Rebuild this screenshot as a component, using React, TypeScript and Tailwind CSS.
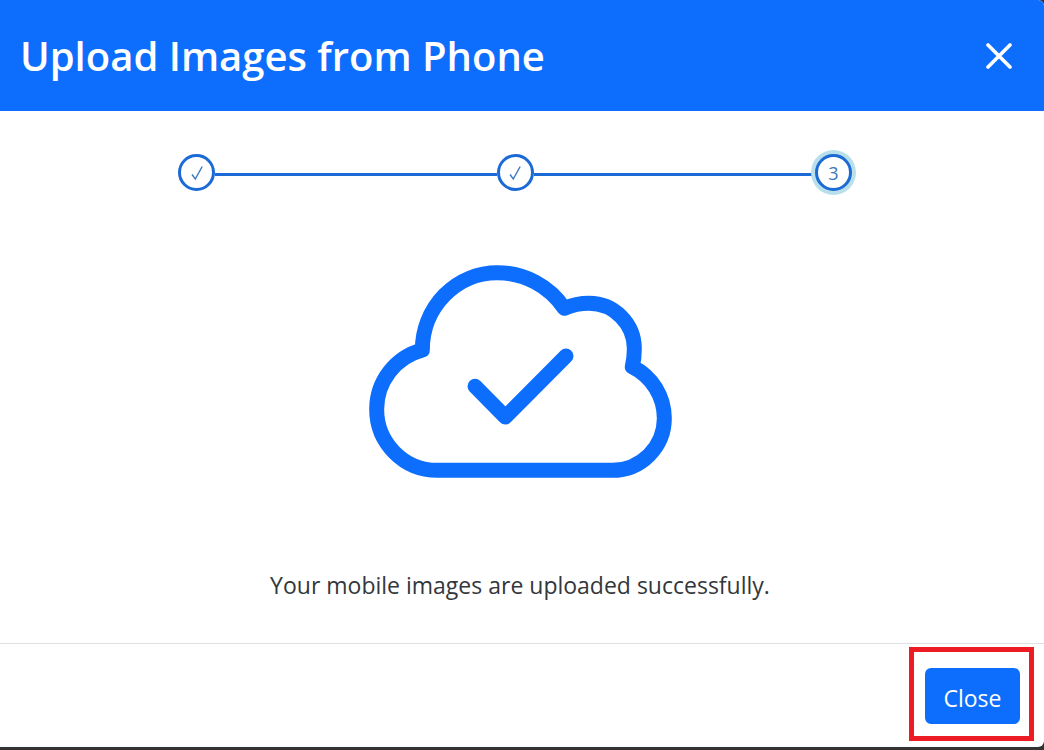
import { Fragment } from "react";

const steps = [
  { number: 1, done: true },
  { number: 2, done: true },
  { number: 3, done: false },
];

export default function App() {
  return (
    <div className="min-h-screen bg-[#333] font-['Open_Sans',sans-serif]">
      <div
        role="dialog"
        aria-labelledby="upload-title"
        className="overflow-hidden rounded-r-md bg-white"
      >
        <header className="flex items-center justify-between bg-[#0d6efd] pt-[26px] pr-7 pb-[25px] pl-5 text-white">
          <h1 id="upload-title" className="text-[40px] leading-[60px] font-semibold">
            Upload Images from Phone
          </h1>
          <button type="button" aria-label="Close dialog" className="p-1">
            <svg viewBox="0 0 26 26" className="size-[26px]" fill="none">
              <path
                d="M2 2 24 24M24 2 2 24"
                stroke="currentColor"
                strokeWidth="3.6"
                strokeLinecap="round"
              />
            </svg>
          </button>
        </header>

        <main className="flex flex-col items-center pt-[43px] pr-1 pb-10">
          <Stepper />
          <CloudCheck />
          <p className="mt-[89px] text-[23px] leading-9 text-[#33373b]">
            Your mobile images are uploaded successfully.
          </p>
        </main>

        <footer className="flex justify-end border-t border-[#dee2e6] pt-[3px] pr-2.5 pb-1.5">
          <div className="border-[5px] border-[#ed1c24] pt-4 pr-[9px] pb-3 pl-[11px]">
            <button
              type="button"
              className="h-14 w-[95px] rounded-md bg-[#0d6efd] pt-1 text-[23px] text-white"
            >
              Close
            </button>
          </div>
        </footer>
      </div>
    </div>
  );
}

function Stepper() {
  return (
    <div className="flex w-full items-center pr-[188px] pl-[178px]">
      {steps.map((step, i) => (
        <Fragment key={step.number}>
          {i > 0 && <span className="mt-1 h-[3px] flex-1 bg-[#1b6ad6]" />}
          <span
            className={`flex size-[37px] items-center justify-center rounded-full border-[3px] border-[#1b6ad6] bg-white text-lg text-[#3a78bd] ${
              step.done ? "" : "ring-4 ring-[#b9dfea]"
            }`}
          >
            {step.done ? <StepCheck /> : step.number}
          </span>
        </Fragment>
      ))}
    </div>
  );
}

function StepCheck() {
  return (
    <svg viewBox="0 0 12 16" className="h-4 w-3" fill="none" aria-label="Done">
      <path
        d="M1 9.5 4.3 14 11.2 1.5"
        stroke="currentColor"
        strokeWidth="1.4"
      />
    </svg>
  );
}

function CloudCheck() {
  return (
    <svg
      viewBox="27 30 909 639"
      className="mt-[74px] h-[213px] w-[303px]"
      fill="none"
      stroke="#0d6efd"
      strokeWidth="45"
      strokeLinecap="round"
      strokeLinejoin="round"
      aria-hidden="true"
    >
      <path d="M232 646H757A156 156 0 0 0 913 490A173 173 0 0 0 817 335A246 246 0 0 0 823 281A136 136 0 0 0 687 145A190 190 0 0 0 613 160A242 242 0 0 0 412 53A225 232 0 0 0 187 285A184 184 0 0 0 50 463A182 183 0 0 0 232 646Z" />
      <path d="M345 394 436 486 618 303" />
    </svg>
  );
}
